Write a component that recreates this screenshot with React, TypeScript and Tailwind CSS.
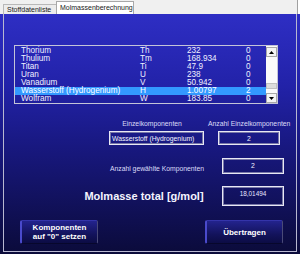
import React from "react";

const rows = [
  ["Thorium", "Th", "232", "0"],
  ["Thulium", "Tm", "168.934", "0"],
  ["Titan", "Ti", "47.9", "0"],
  ["Uran", "U", "238", "0"],
  ["Vanadium", "V", "50.942", "0"],
  ["Wasserstoff (Hydrogenium)", "H", "1.00797", "2"],
  ["Wolfram", "W", "183.85", "0"],
];

function Arrow({ up }: { up: boolean }) {
  return (
    <div className="h-[10px] w-[11px] bg-[#f4f4f4] border border-[#a8a8a8] flex items-center justify-center">
      <svg width="5" height="3" viewBox="0 0 5 3">
        {up ? <polygon points="0,3 5,3 2.5,0" fill="#000" /> : <polygon points="0,0 5,0 2.5,3" fill="#000" />}
      </svg>
    </div>
  );
}

function Btn({ children }: { children: React.ReactNode }) {
  return (
    <div className="w-[78px] h-[24px] rounded-[2px] bg-[linear-gradient(180deg,#23238e_0%,#13135c_60%,#0c0c44_100%)] border-l-2 border-l-[#4a4acc] border-t border-t-[#3434aa] border-r border-r-[#4a4a78] border-b border-b-[#07072c] flex items-center justify-center text-center text-white font-bold text-[8px] leading-[9px]">
      {children}
    </div>
  );
}

export default function App() {
  return (
    <div className="w-[300px] h-[254px] overflow-hidden" style={{ fontFamily: '"Liberation Sans", Arial, sans-serif' }}>
      {/* tab bar */}
      <div className="h-[14px] bg-[#f0f0f0] flex items-end relative border-r border-r-[#a0a0a0] w-[298px]">
        <div className="ml-[3px] h-[10px] w-[53px] bg-[#ececec] border-t border-l border-[#b8b8b8] text-[7px] leading-[10px] text-[#202020] pl-[3px] whitespace-nowrap">
          Stoffdatenliste
        </div>
        <div className="h-[13px] w-[78px] bg-white border-t border-l border-r border-[#a8a8a8] text-[7px] leading-[11px] text-[#202020] pl-[3px] whitespace-nowrap">
          Molmassenberechnung
        </div>
      </div>
      {/* panel */}
      <div className="h-[240px] w-[300px] bg-[linear-gradient(180deg,#2e2ec4_0%,#2222a8_30%,#181880_55%,#0b0b3a_100%)]">
        <div className="ml-[3px] w-[294px] h-[238px] border-l border-r border-b border-[#b8b8d0] flex flex-col">
          {/* list */}
          <div className="mt-[31px] ml-[10px] w-[264px] h-[59px] border border-[#c4c4d8] flex text-[#f0f0ff]">
            <div className="flex-1 pt-[1px]">
              {rows.map((r, i) => (
                <div
                  key={r[0]}
                  className={
                    "h-[8px] text-[8.2px] leading-[8px] pl-[6px] grid grid-cols-[119px_47px_59px_1fr] whitespace-nowrap " +
                    (i === 5 ? "bg-[#3399ff] text-white" : "")
                  }
                >
                  <span>{r[0]}</span>
                  <span>{r[1]}</span>
                  <span>{r[2]}</span>
                  <span>{r[3]}</span>
                </div>
              ))}
            </div>
            <div className="w-[11px] bg-[#fafafa] flex flex-col pt-[1px]">
              <Arrow up />
              <div className="h-[36px] flex flex-col">
                <div className="h-[26px]" />
                <div className="h-[6px] bg-[#dcdcdc] border border-[#c0c0c0]" />
              </div>
              <Arrow up={false} />
            </div>
          </div>
          {/* labels */}
          <div className="mt-[16px] flex text-[6.8px] leading-[8px] text-[#dcdcf8] whitespace-nowrap">
            <div className="ml-[101px] w-[94px] text-center">Einzelkomponenten</div>
            <div className="ml-[9px] w-[80px] text-center">Anzahl Einzelkomponenten</div>
          </div>
          {/* boxes */}
          <div className="mt-[3px] flex text-[6.8px] leading-[9px] text-[#f4f4ff]">
            <div className="ml-[105px] w-[95px] h-[14px] border border-[#e8e8f4] shadow-[inset_0_0_0_1px_#7878a8] pl-[2px] pt-[2px] whitespace-nowrap overflow-hidden">
              Wasserstoff (Hydrogenium)
            </div>
            <div className="ml-[14px] w-[62px] h-[14px] border border-[#e8e8f4] shadow-[inset_0_0_0_1px_#7878a8] text-center pt-[2px]">
              2
            </div>
          </div>
          {/* anzahl gewählte */}
          <div className="mt-[13px] flex items-start text-[#f4f4ff]">
            <div className="ml-[101px] w-[104px] mt-[7px] text-center text-[6.8px] leading-[8px] text-[#dcdcf8] whitespace-nowrap">
              Anzahl gewählte Komponenten
            </div>
            <div className="ml-[13px] w-[62px] h-[16px] border border-[#e8e8f4] shadow-[inset_0_0_0_1px_#7878a8] text-center pt-[2px] text-[6.8px] leading-[9px]">
              2
            </div>
          </div>
          {/* molmasse */}
          <div className="mt-[12px] flex items-start">
            <div className="ml-[76px] w-[128px] mt-[3px] text-center font-bold text-[11px] leading-[14px] text-[#f4f4ff] whitespace-nowrap">
              Molmasse total [g/mol]
            </div>
            <div className="ml-[14px] w-[62px] h-[20px] border border-[#e8e8f4] shadow-[inset_0_0_0_1px_#7878a8] text-center pt-[2px] text-[6.4px] leading-[9px] text-[#e8e8ff]">
              18,01494
            </div>
          </div>
          {/* buttons */}
          <div className="mt-[14px] flex">
            <div className="ml-[16px]">
              <Btn>
                Komponenten
                <br />
                auf "0" setzen
              </Btn>
            </div>
            <div className="ml-[107px]">
              <Btn>Übertragen</Btn>
            </div>
          </div>
        </div>
      </div>
    </div>
  );
}
